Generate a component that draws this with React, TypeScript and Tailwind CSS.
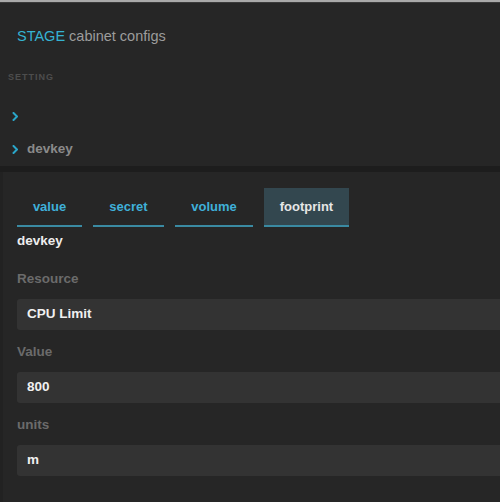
import React from "react";

const tabs = [
  { label: "value", width: "w-[65px]", active: false },
  { label: "secret", width: "w-[71px]", active: false },
  { label: "volume", width: "w-[78px]", active: false },
  { label: "footprint", width: "w-[85px]", active: true },
];

const fields = [
  { label: "Resource", value: "CPU Limit" },
  { label: "Value", value: "800" },
  { label: "units", value: "m" },
];

function Chevron() {
  return (
    <svg width="7" height="9" viewBox="0 0 7 9" className="shrink-0">
      <polyline
        points="1.5,1 5,4.5 1.5,8"
        fill="none"
        stroke="#2aa6c9"
        strokeWidth="2"
        strokeLinecap="round"
        strokeLinejoin="round"
      />
    </svg>
  );
}

export default function App() {
  return (
    <div
      className="w-[500px] h-[502px] overflow-hidden bg-[#262626] flex flex-col"
      style={{ fontFamily: '"Liberation Sans", Arial, sans-serif' }}
    >
      {/* window top edge */}
      <div className="h-[2px] bg-[#a9a9a9] shrink-0" />
      <div className="h-[1px] bg-[#3a3a3a] shrink-0" />

      {/* header */}
      <div className="h-[68px] shrink-0 flex items-center pl-[17px] text-[14.5px]">
        <span className="text-[#35b3d3]">STAGE</span>
        <span className="text-[#9c9c9c] ml-[4px]">cabinet configs</span>
      </div>

      <div className="h-[14px] shrink-0 flex items-center pl-[8px] text-[9px] font-bold tracking-[1px] text-[#4d4d4d]">
        SETTING
      </div>

      <div className="h-[15px] shrink-0" />

      <div className="h-[33px] shrink-0 flex items-center pl-[12px]">
        <Chevron />
      </div>
      <div className="h-[33px] shrink-0 flex items-center pl-[12px] gap-[8px]">
        <Chevron />
        <span className="text-[13.5px] font-bold text-[#8a8a8a]">devkey</span>
      </div>

      <div className="h-[6px] shrink-0 bg-[#1d1d1d]" />

      {/* detail panel */}
      <div className="flex-1 flex flex-col pl-[17px] pt-[16px] border-l-[3px] border-[#222222] bg-[#262626]">
        <div className="flex gap-[11px] -ml-[3px]">
          {tabs.map((t) => (
            <div
              key={t.label}
              className={`h-[39px] ${t.width} flex items-center justify-center border-b-[2px] border-[#3a8aa2] text-[13px] font-bold ${
                t.active ? "bg-[#33474f] text-[#e6e6e6]" : "text-[#3fb0d9]"
              }`}
            >
              {t.label}
            </div>
          ))}
        </div>

        <div className="h-[18px] mt-[5px] -ml-[3px] flex items-center text-[13.5px] font-bold text-[#ededed]">
          devkey
        </div>

        <div className="-ml-[3px] mt-[20px] flex flex-col">
          {fields.map((f, i) => (
            <div key={f.label} className={i > 0 ? "mt-[13px]" : ""}>
              <div className="h-[18px] flex items-center text-[13.5px] font-bold text-[#6b6b6b]">
                {f.label}
              </div>
              <div className="mt-[11px] h-[31px] w-[500px] rounded-[3px] bg-[#333333] flex items-center pl-[10px] text-[13.5px] font-bold text-[#f0f0f0]">
                {f.value}
              </div>
            </div>
          ))}
        </div>
      </div>
    </div>
  );
}
